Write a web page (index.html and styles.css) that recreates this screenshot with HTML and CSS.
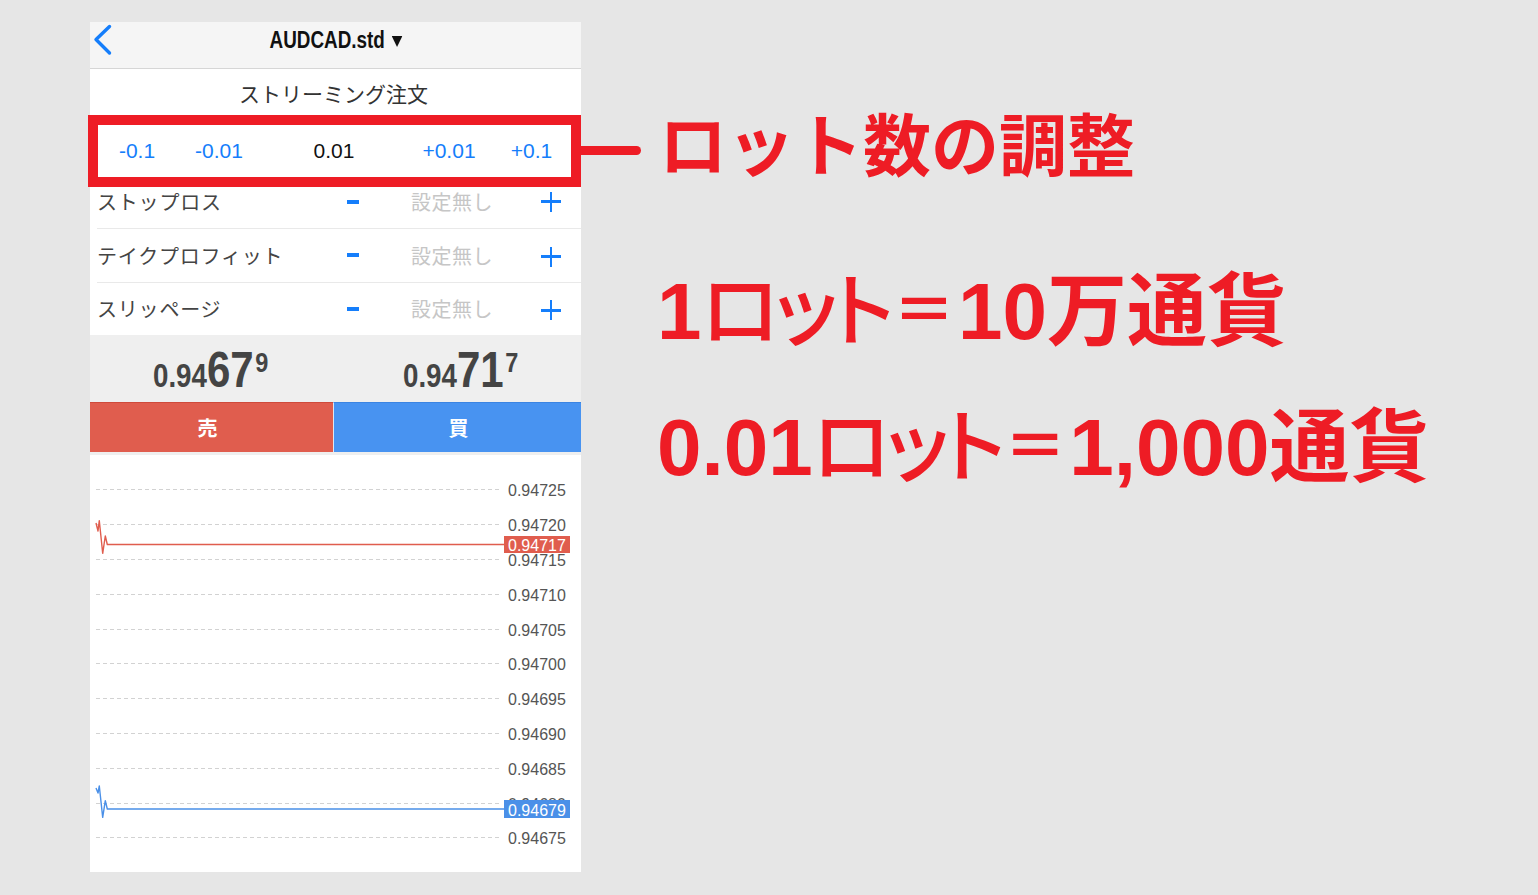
FILE: index.html
```html
<!DOCTYPE html>
<html lang="ja">
<head>
<meta charset="utf-8">
<title>AUDCAD.std ストリーミング注文</title>
<link rel="stylesheet" href="styles.css">
</head>
<body>
<div class="page">
  <div class="phone">
    <header class="nav">
      <svg class="back" width="24" height="36" viewBox="0 0 24 36"><polyline points="19.5,4.5 6,17.5 19.5,31" fill="none" stroke="#157efb" stroke-width="3.4" stroke-linecap="round" stroke-linejoin="round"/></svg>
      <div class="title"><span class="narrow">AUDCAD.std<svg class="caret" width="13" height="11" viewBox="0 0 13 11"><polygon points="0,0 13,0 6.5,11" fill="#111"/></svg></span></div>
      <span></span>
    </header>
    <div class="mode">ストリーミング注文</div>
    <div class="lots">
      <span class="step">-0.1</span>
      <span class="step">-0.01</span>
      <span class="lot">0.01</span>
      <span class="step">+0.01</span>
      <span class="step">+0.1</span>
    </div>
    <div class="row first">
      <span class="label">ストップロス</span>
      <span class="minus"></span>
      <span class="value">設定無し</span>
      <span class="plus"></span>
    </div>
    <div class="row">
      <span class="label">テイクプロフィット</span>
      <span class="minus"></span>
      <span class="value">設定無し</span>
      <span class="plus"></span>
    </div>
    <div class="row last">
      <span class="label">スリッページ</span>
      <span class="minus"></span>
      <span class="value">設定無し</span>
      <span class="plus"></span>
    </div>
    <div class="prices">
      <div class="price left"><span class="digits"><span class="p-s">0.94</span><span class="p-b">67</span><span class="p-x">9</span></span></div>
      <div class="price right"><span class="digits"><span class="p-s">0.94</span><span class="p-b">71</span><span class="p-x">7</span></span></div>
    </div>
    <div class="actions">
      <div class="btn sell">売</div>
      <div class="btn buy">買</div>
    </div>
    <div class="chart">
      <svg width="491" height="417" viewBox="0 0 491 417">
        <g stroke="#d2d2d2" stroke-width="1" stroke-dasharray="4 3">
          <line x1="6" x2="410" y1="34.5" y2="34.5"/>
          <line x1="6" x2="410" y1="69.5" y2="69.5"/>
          <line x1="6" x2="410" y1="104.5" y2="104.5"/>
          <line x1="6" x2="410" y1="139.5" y2="139.5"/>
          <line x1="6" x2="410" y1="174.5" y2="174.5"/>
          <line x1="6" x2="410" y1="208.5" y2="208.5"/>
          <line x1="6" x2="410" y1="243.5" y2="243.5"/>
          <line x1="6" x2="410" y1="278.5" y2="278.5"/>
          <line x1="6" x2="410" y1="313.5" y2="313.5"/>
          <line x1="6" x2="410" y1="348.5" y2="348.5"/>
          <line x1="6" x2="410" y1="382.5" y2="382.5"/>
        </g>
        <g class="axis" fill="#555">
          <text x="418" y="40.5">0.94725</text>
          <text x="418" y="75.5">0.94720</text>
          <text x="418" y="110.5">0.94715</text>
          <text x="418" y="145.5">0.94710</text>
          <text x="418" y="180.5">0.94705</text>
          <text x="418" y="214.5">0.94700</text>
          <text x="418" y="249.5">0.94695</text>
          <text x="418" y="284.5">0.94690</text>
          <text x="418" y="319.5">0.94685</text>
          <text x="418" y="354.5">0.94680</text>
          <text x="418" y="388.5">0.94675</text>
        </g>
        <polyline points="6,68 8,76 9.3,65.7 12.7,98.3 15.3,81 17.3,89.5 414,89.5" fill="none" stroke="#e05d4e" stroke-width="1.4" stroke-linejoin="round"/>
        <rect x="414" y="81" width="66" height="17" fill="#e05d4e"/>
        <text class="axis" x="418" y="95.5" fill="#fff">0.94717</text>
        <polyline points="6,333 8,338 9.3,331 12.7,362.3 15.3,345.7 17.3,354 414,354" fill="none" stroke="#4a90e8" stroke-width="1.4" stroke-linejoin="round"/>
        <rect x="414" y="345" width="66" height="18" fill="#4a90e8"/>
        <text class="axis" x="418" y="360.5" fill="#fff">0.94679</text>
      </svg>
    </div>
  </div>
  <div class="notes">
    <div class="note-head">ロット数の調整</div>
    <div class="note-line one"><span class="num">1</span><span class="kana">ロット</span><span class="eq">＝</span><span class="num">10</span>万通貨</div>
    <div class="note-line two"><span class="num">0.01</span><span class="kana">ロット</span><span class="eq">＝</span><span class="num">1,000</span>通貨</div>
  </div>
</div>
</body>
</html>
```

FILE: styles.css
```css
html, body {
  margin: 0;
  padding: 0;
}
body {
  background: #e6e6e6;
  font-family: "Liberation Sans", "Noto Sans CJK JP", sans-serif;
  width: 1538px;
  height: 895px;
  overflow: hidden;
}
.page {
  display: flex;
  align-items: flex-start;
  padding: 22px 0 0 90px;
}
.phone {
  width: 491px;
  height: 850px;
  background: #fff;
  display: flex;
  flex-direction: column;
}
.nav {
  height: 47px;
  box-sizing: border-box;
  padding-bottom: 11px;
  background: #f5f5f5;
  border-bottom: 1px solid #d6d6d6;
  display: grid;
  grid-template-columns: 1fr auto 1fr;
  align-items: center;
}
.back {
  display: block;
}
.title {
  font-family: "Liberation Sans", sans-serif;
  font-weight: bold;
  font-size: 23px;
  color: #111;
  line-height: 1;
}
.narrow {
  display: inline-flex;
  align-items: center;
  transform: scaleX(0.82);
  transform-origin: center;
}
.caret {
  margin-left: 8px;
  margin-top: 2px;
}
.mode {
  height: 46px;
  display: flex;
  align-items: center;
  justify-content: center;
  font-family: "Noto Sans CJK JP", sans-serif;
  font-size: 21px;
  color: #333;
  padding-top: 2px;
  padding-right: 4px;
  box-sizing: border-box;
}
.lots {
  position: relative;
  margin-left: -2px;
  height: 72px;
  box-sizing: border-box;
  border: 10px solid #ee1c25;
  display: grid;
  grid-template-columns: 78px 86px 144px 86px 79px;
  align-items: center;
  font-size: 21px;
}
.lots::after {
  content: "";
  position: absolute;
  left: 100%;
  top: 21px;
  width: 60px;
  height: 9px;
  background: #ee1c25;
  border-radius: 0 5px 5px 0;
  margin-left: 10px;
}
.lots span {
  text-align: center;
}
.step {
  color: #157efb;
}
.lot {
  color: #111;
}
.row {
  display: grid;
  grid-template-columns: 240px 32px 162px 40px;
  align-items: center;
  height: 53px;
  margin-left: 7px;
  border-bottom: 1px solid #e9e9e9;
  font-family: "Noto Sans CJK JP", sans-serif;
  font-size: 20px;
  letter-spacing: 0.8px;
}
.row.first {
  box-sizing: content-box;
  height: 29px;
  padding-bottom: 12px;
  align-items: end;
}
.row.last {
  border-bottom: none;
}
.label {
  color: #444;
}
.minus {
  justify-self: center;
  width: 12px;
  height: 3.5px;
  background: #157efb;
}
.value {
  color: #c6c6c6;
  padding-left: 42px;
  letter-spacing: 0.5px;
}
.plus {
  justify-self: center;
  position: relative;
  width: 20px;
  height: 20px;
  margin-top: 3px;
}
.plus::before, .plus::after {
  content: "";
  position: absolute;
  background: #157efb;
}
.plus::before {
  left: 0;
  right: 0;
  top: 8.6px;
  height: 2.8px;
}
.plus::after {
  top: 0;
  bottom: 0;
  left: 8.6px;
  width: 2.8px;
}
.row.first .plus {
  margin-bottom: 4px;
}
.row.first .minus {
  margin-bottom: 12px;
}
.prices {
  height: 67px;
  background: #efefef;
  display: flex;
}
.price {
  flex: 1;
  display: flex;
  justify-content: center;
  align-items: flex-start;
  font-family: "Liberation Sans", sans-serif;
  font-weight: bold;
  color: #444;
  line-height: 1;
  padding-top: 10px;
}
.price.left {
  padding-right: 10px;
}
.digits {
  display: inline-block;
  white-space: nowrap;
  transform: scaleX(0.84);
  transform-origin: center;
}
.p-s {
  font-size: 33px;
}
.p-b {
  font-size: 50px;
}
.p-x {
  font-size: 28px;
  position: relative;
  top: -15px;
  margin-left: 2px;
}
.actions {
  display: flex;
  height: 50px;
}
.btn {
  display: flex;
  align-items: center;
  justify-content: center;
  color: #fff;
  font-family: "Noto Sans CJK JP", sans-serif;
  font-weight: bold;
  font-size: 20px;
  box-sizing: border-box;
}
.sell {
  width: 243px;
  background: #e05d4e;
  border-top: 1px solid #cf4a3b;
  padding-right: 8px;
}
.buy {
  flex: 1;
  background: #4893f1;
  border-top: 1px solid #3b84e2;
  border-left: 1px solid #dfe7f0;
  padding-left: 2px;
}
.chart {
  flex: 1;
  border-top: 3px solid #efefef;
}
.chart svg {
  display: block;
}
.axis {
  font-family: "Liberation Sans", sans-serif;
  font-size: 16px;
}
.notes {
  margin-left: 76px;
  padding-top: 86px;
  display: flex;
  flex-direction: column;
  color: #ee1c25;
}
.note-head {
  font-family: "Noto Sans CJK JP", sans-serif;
  font-weight: 700;
  font-size: 68px;
  line-height: 1;
  margin-left: 2px;
}
.note-line {
  font-family: "Noto Sans CJK JP", sans-serif;
  font-weight: 700;
  font-size: 80px;
  line-height: 1;
  white-space: nowrap;
}
.note-line.one {
  margin-top: 88px;
}
.note-line.two {
  margin-top: 48px;
}
.num {
  font-family: "Liberation Sans", sans-serif;
  font-weight: bold;
}
.kana {
  font-weight: 500;
  font-feature-settings: "palt";
  letter-spacing: -5px;
}
.eq {
  font-weight: 700;
  font-size: 62px;
  vertical-align: 6px;
  margin: 0 3px 0 4px;
}
```
